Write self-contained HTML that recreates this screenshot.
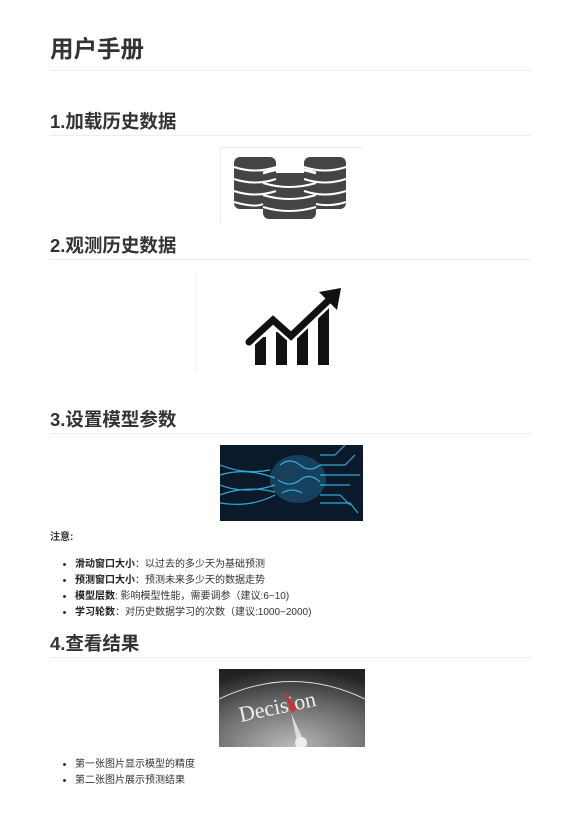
<!DOCTYPE html>
<html><head><meta charset="utf-8"><style>
body{margin:0;background:#fff;width:577px;height:831px;position:relative;font-family:"Liberation Sans","Noto Sans CJK SC",sans-serif;color:#333;overflow:hidden}
.h{position:absolute;left:50px;width:481px;font-weight:bold;border-bottom:1px solid #eee;color:#333}
.h1{top:34px;font-size:23.5px;height:36px;line-height:30px}
.h2{font-size:18.5px;height:24px;line-height:22px}
.t{position:absolute;font-size:10px;line-height:16px}
ul{position:absolute;left:58px;margin:0;padding-left:17px;font-size:10px;line-height:16px}
ul b{color:#222}
svg{position:absolute}
</style></head><body>
<div class="h h1">用户手册</div>
<div class="h h2" style="top:111px">1.加载历史数据</div>
<svg style="left:220px;top:147px" width="143" height="76" viewBox="0 0 143 76">
<rect x="0.5" y="0" width="142" height="76" fill="#fff"/><line x1="0.5" y1="0" x2="0.5" y2="76" stroke="#eee"/><line x1="0" y1="0.5" x2="143" y2="0.5" stroke="#eee"/>
<g fill="#444">
<rect x="14" y="10" width="42" height="52" rx="6"/><rect x="84" y="10" width="42" height="52" rx="6"/><rect x="43" y="26" width="53" height="46" rx="6"/></g>
<g stroke="#fff" stroke-width="2" fill="none">
<path d="M14 20q21 7 42 0M14 32q21 7 42 0M14 44q21 7 42 0M14 55q21 6 29 2"/>
<path d="M84 20q21 7 42 0M84 32q21 7 42 0M84 44q21 7 42 0M96 57q15 3 30-2"/>
<path d="M43 36q26 8 53 0M43 48q26 8 53 0M43 60q26 8 53 0"/>
<path d="M43 26q26 -9 53 0" stroke-width="3"/></g>
</svg>
<div class="h h2" style="top:235px">2.观测历史数据</div>
<svg style="left:195px;top:272px" width="170" height="100" viewBox="0 0 170 100">
<line x1="0.5" y1="0" x2="0.5" y2="100" stroke="#f2f2f2"/>
<g fill="#111"><rect x="60" y="65" width="11" height="28"/><rect x="81" y="60" width="11" height="33"/><rect x="102" y="50" width="11" height="43"/><rect x="123" y="35" width="11" height="58"/></g>
<path d="M54 70L78 48L96 64L136 26" stroke="#fff" stroke-width="12" fill="none"/>
<path d="M54 70L78 48L96 64L136 26" stroke="#111" stroke-width="7" fill="none" stroke-linecap="round"/>
<path d="M124 20L146 16L142 38Z" fill="#111"/>
</svg>
<div class="h h2" style="top:409px">3.设置模型参数</div>
<svg style="left:220px;top:445px" width="143" height="76" viewBox="0 0 143 76">
<rect width="143" height="76" fill="#0a1a2a"/>
<ellipse cx="78" cy="34" rx="28" ry="24" fill="#1a4a6a" opacity=".8"/>
<g stroke="#39b8e8" stroke-width="1.2" fill="none" opacity=".9">
<path d="M0 20q25 10 50 5M0 30q25-8 55 3M0 40q25 10 55 0M0 50q25-10 55-3M0 58q30 5 55-8"/>
<path d="M100 10h15l10-10M100 20h25l10-10M100 30h40M100 40h30M100 50h20l10 10M100 58h30l8 10"/>
<path d="M60 20q10-8 20 0t20 0M58 35q12 8 22 0t20 2M62 48q10-6 20 0"/></g>
</svg>
<div class="t" style="left:50px;top:530px;font-weight:bold">注意:</div>
<ul style="top:557px">
<li><b>滑动窗口大小</b>：以过去的多少天为基础预测</li>
<li><b>预测窗口大小</b>：预测未来多少天的数据走势</li>
<li><b>模型层数</b>: 影响模型性能，需要调参（建议:6~10)</li>
<li><b>学习轮数</b>：对历史数据学习的次数（建议:1000~2000)</li>
</ul>
<div class="h h2" style="top:633px">4.查看结果</div>
<svg style="left:219px;top:669px" width="146" height="78" viewBox="0 0 146 78">
<defs><radialGradient id="g" cx=".5" cy="1" r="1"><stop offset="0" stop-color="#bbb"/><stop offset=".6" stop-color="#666"/><stop offset="1" stop-color="#222"/></radialGradient></defs>
<rect width="146" height="78" fill="url(#g)"/>
<path d="M0 30Q73-5 146 30" stroke="#ddd" stroke-width="1" fill="none"/>
<text x="20" y="42" font-family="Liberation Serif,serif" font-size="22" fill="#eee" transform="rotate(-12 73 40)">Decision</text>
<path d="M66 22L78 40L72 44Z" fill="#c33"/>
<path d="M72 44L84 70L78 72Z" fill="#ddd"/>
<circle cx="82" cy="74" r="6" fill="#eee"/>
</svg>
<ul style="top:757px">
<li>第一张图片显示模型的精度</li>
<li>第二张图片展示预测结果</li>
</ul>
</body></html>
